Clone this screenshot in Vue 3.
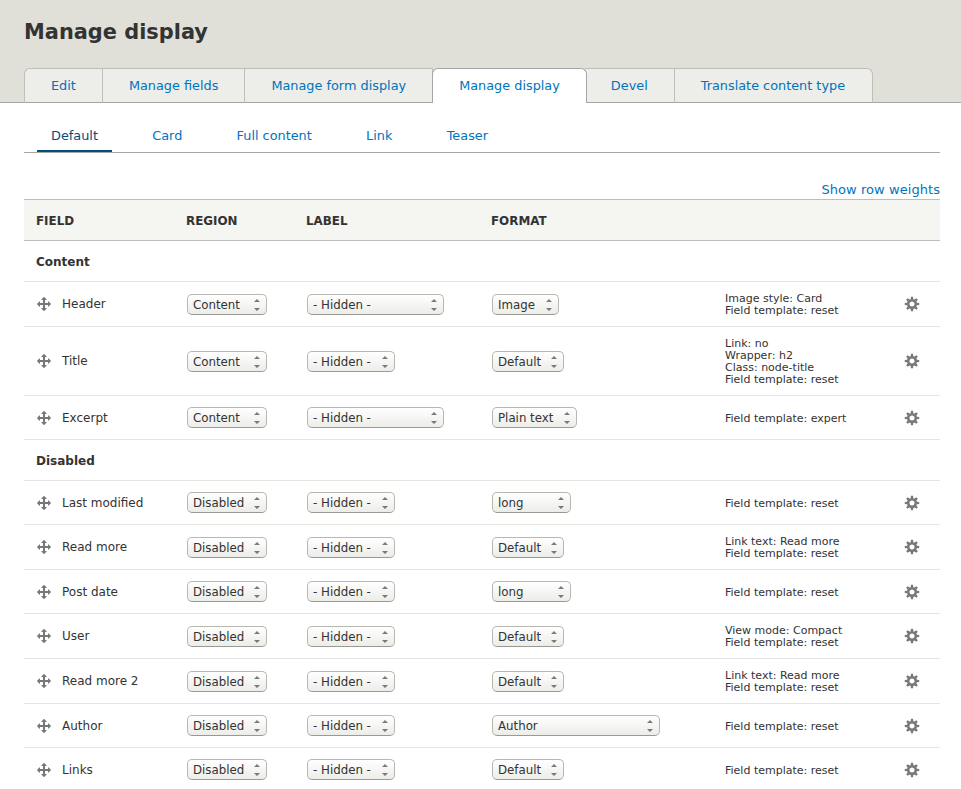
<script setup>
const tabs = ['Edit', 'Manage fields', 'Manage form display', 'Manage display', 'Devel', 'Translate content type']
const subtabs = ['Default', 'Card', 'Full content', 'Link', 'Teaser']
const sections = [
  { title: 'Content', rows: [
    { name: 'Header', region: 'Content', label: 'wide', format: 'Image', fw: 'f-image', summary: ['Image style: Card', 'Field template: reset'] },
    { name: 'Title', region: 'Content', label: 'short', format: 'Default', fw: 'f-default', summary: ['Link: no', 'Wrapper: h2', 'Class: node-title', 'Field template: reset'] },
    { name: 'Excerpt', region: 'Content', label: 'wide', format: 'Plain text', fw: 'f-plain', summary: ['Field template: expert'] },
  ] },
  { title: 'Disabled', rows: [
    { name: 'Last modified', region: 'Disabled', label: 'short', format: 'long', fw: 'f-long', summary: ['Field template: reset'] },
    { name: 'Read more', region: 'Disabled', label: 'short', format: 'Default', fw: 'f-default', summary: ['Link text: Read more', 'Field template: reset'] },
    { name: 'Post date', region: 'Disabled', label: 'short', format: 'long', fw: 'f-long', summary: ['Field template: reset'] },
    { name: 'User', region: 'Disabled', label: 'short', format: 'Default', fw: 'f-default', summary: ['View mode: Compact', 'Field template: reset'] },
    { name: 'Read more 2', region: 'Disabled', label: 'short', format: 'Default', fw: 'f-default', summary: ['Link text: Read more', 'Field template: reset'] },
    { name: 'Author', region: 'Disabled', label: 'short', format: 'Author', fw: 'f-author', summary: ['Field template: reset'] },
    { name: 'Links', region: 'Disabled', label: 'short', format: 'Default', fw: 'f-default', summary: ['Field template: reset'] },
  ] },
]
</script>

<template>
  <div class="page">
    <header class="head">
      <h1>Manage display</h1>
      <ul class="tabs">
        <li v-for="t in tabs" :key="t" :class="{ active: t === 'Manage display' }"><a href="#">{{ t }}</a></li>
      </ul>
    </header>
    <main class="content">
      <ul class="subtabs">
        <li v-for="(t, i) in subtabs" :key="t" :class="{ active: i === 0 }"><a href="#">{{ t }}</a></li>
      </ul>
      <div class="weights"><a href="#">Show row weights</a></div>
      <table>
        <thead>
          <tr>
            <th class="c-field">Field</th>
            <th class="c-region">Region</th>
            <th class="c-label">Label</th>
            <th class="c-format">Format</th>
            <th class="c-summary"></th>
            <th class="c-op"></th>
          </tr>
        </thead>
        <tbody v-for="s in sections" :key="s.title">
          <tr class="section"><td colspan="6">{{ s.title }}</td></tr>
          <tr v-for="r in s.rows" :key="r.name">
            <td class="name">
              <svg class="move" viewBox="0 0 16 16" width="16" height="16"><path fill="#787878" d="M14.904 7.753l-2.373-2.372c-.291-.292-.529-.193-.529.22v1.399h-3v-3h1.398c.414 0 .512-.239.221-.53l-2.371-2.372c-.137-.136-.36-.136-.497 0l-2.372 2.372c-.292.292-.193.53.22.53h1.399v3h-3v-1.369c0-.413-.239-.511-.53-.22l-2.372 2.372c-.136.136-.136.359 0 .494l2.372 2.372c.291.292.53.192.53-.219v-1.43h3v3h-1.4c-.413 0-.511.238-.22.529l2.374 2.373c.137.137.36.137.495 0l2.373-2.373c.29-.291.19-.529-.222-.529h-1.398v-3h3v1.4c0 .412.238.511.529.219l2.373-2.371c.137-.137.137-.359 0-.495z"/></svg>
              <span>{{ r.name }}</span>
            </td>
            <td>
              <span class="sel f-region">{{ r.region }}<svg class="arrows" viewBox="0 0 8 14" width="8" height="14"><path fill="#7a7a7a" d="M1 4l3-3 3 3zM1 10h6l-3 3z"/></svg></span>
            </td>
            <td>
              <span class="sel" :class="r.label === 'wide' ? 'l-wide' : 'l-short'">- Hidden -<svg class="arrows" viewBox="0 0 8 14" width="8" height="14"><path fill="#7a7a7a" d="M1 4l3-3 3 3zM1 10h6l-3 3z"/></svg></span>
            </td>
            <td>
              <span class="sel" :class="r.fw">{{ r.format }}<svg class="arrows" viewBox="0 0 8 14" width="8" height="14"><path fill="#7a7a7a" d="M1 4l3-3 3 3zM1 10h6l-3 3z"/></svg></span>
            </td>
            <td class="summary"><div v-for="l in r.summary" :key="l">{{ l }}</div></td>
            <td class="op">
              <svg viewBox="0 0 16 16" width="16" height="16"><path fill="#787878" d="M15.176 9.041c.045-.327.076-.658.076-.998 0-.36-.035-.71-.086-1.056l-2.275-.293c-.115-.426-.283-.827-.498-1.201l1.396-1.808c-.416-.551-.906-1.039-1.459-1.452l-1.807 1.391c-.373-.215-.774-.383-1.2-.499l-.292-2.252c-.338-.048-.677-.081-1.029-.081s-.694.033-1.032.082l-.291 2.251c-.426.116-.826.284-1.2.499l-1.805-1.391c-.552.413-1.044.901-1.459 1.452l1.395 1.808c-.215.374-.383.774-.499 1.2l-2.276.294c-.05.346-.085.696-.085 1.056 0 .34.031.671.077.998l2.285.295c.115.426.284.826.499 1.2l-1.417 1.836c.411.55.896 1.038 1.443 1.452l1.842-1.42c.374.215.774.383 1.2.498l.298 2.311c.337.047.677.08 1.025.08s.688-.033 1.021-.08l.299-2.311c.426-.115.826-.283 1.201-.498l1.842 1.42c.547-.414 1.031-.902 1.443-1.452l-1.416-1.837c.215-.373.383-.773.498-1.199l2.286-.295zm-7.174 1.514c-1.406 0-2.543-1.137-2.543-2.541 0-1.402 1.137-2.541 2.543-2.541 1.402 0 2.541 1.138 2.541 2.541 0 1.404-1.139 2.541-2.541 2.541z"/></svg>
            </td>
          </tr>
        </tbody>
      </table>
    </main>
  </div>
</template>

<style>
html, body { margin: 0; overflow: hidden; background: #fff; }
</style>

<style scoped>
.page {
  height: 789px;
  overflow: hidden;
  font-family: "DejaVu Sans", sans-serif;
  font-size: 12px;
  color: #333;
}
a { color: #0074bd; text-decoration: none; }
ul { list-style: none; margin: 0; padding: 0; }
.head {
  background: #e0e0d8;
  padding: 20px 0 0 24px;
  height: 83px;
  position: relative;
  box-shadow: inset 0 -1px 0 #a6a6a6;
}
h1 {
  margin: 0;
  font-size: 20.9px;
  font-weight: 700;
  line-height: 25px;
  color: #333;
}
.tabs {
  display: flex;
  margin-top: 23px;
  height: 35px;
}
.tabs li {
  box-sizing: border-box;
  height: 35px;
  background: #ededE9;
  border: 1px solid #bfbfba;
  border-left-width: 0;
  border-bottom: 0;
  box-shadow: inset 0 -1px 0 #a6a6a6;
}
.tabs li:first-child { border-left-width: 1px; border-top-left-radius: 6px; }
.tabs li:last-child { border-top-right-radius: 6px; padding-right: 1px; }
.tabs li.active {
  background: #fff;
  height: 35px;
  border-color: #a6a6a6;
  border-width: 1px 1px 0 1px;
  margin: 0 -2px 0 -1px;
  border-radius: 6px 6px 0 0;
  box-shadow: none;
  position: relative;
  z-index: 1;
}
.tabs a {
  display: block;
  padding: 0 26px;
  line-height: 33px;
  font-size: 12.85px;
}
.content { padding: 0 21px 0 24px; }
.subtabs {
  display: flex;
  height: 49px;
  border-bottom: 1px solid #a6a6a6;
  padding-left: 13px;
}
.subtabs li { margin-right: 26.3px; height: 49px; box-sizing: border-box; }
.subtabs a {
  display: block;
  padding: 0 14px;
  line-height: 66px;
  height: 49px;
  box-sizing: border-box;
  font-size: 12.85px;
}
.subtabs li.active a {
  color: #004f80;
  border-bottom: 2px solid #004f80;
}
.weights {
  text-align: right;
  margin-top: 28px;
  height: 18px;
  line-height: 17px;
  font-size: 13px;
  letter-spacing: 0.06px;
}
table {
  border-collapse: separate;
  border-spacing: 0;
  table-layout: fixed;
  width: 916px;
}
th {
  height: 42px;
  box-sizing: border-box;
  background: #f5f5f2;
  border-top: 1px solid #bfbfba;
  border-bottom: 1px solid #bfbfba;
  padding: 2px 12px 0;
  text-align: left;
  text-transform: uppercase;
  font-size: 11.9px;
  font-weight: 700;
  color: #333;
}
.c-field { width: 150px; }
.c-region { width: 120px; }
.c-label { width: 185px; }
.c-format { width: 234px; }
.c-summary { width: 179px; }
td {
  height: 44px;
  box-sizing: border-box;
  padding: 10px 12px;
  border-bottom: 1px solid #e6e4df;
  vertical-align: middle;
}
.section td {
  height: 41px;
  padding: 11px 12px 9px;
  font-weight: 700;
  font-size: 12px;
}
.name { white-space: nowrap; font-size: 12px; padding-right: 0; }
.name .move { vertical-align: -4px; width: 16px; margin-right: 10px; }
.sel {
  display: block;
  position: relative;
  box-sizing: border-box;
  height: 21px;
  margin: 0 0 0 1px;
  padding-left: 5px;
  line-height: 20px;
  font-size: 11.8px;
  white-space: nowrap;
  color: #333;
  border: 1px solid #b8b8b0;
  border-bottom-color: #9a9a94;
  border-radius: 5px;
  background: linear-gradient(#ffffff, #ecece8);
}
.arrows { position: absolute; right: 5px; top: 3px; }
.f-region { width: 80px; }
.l-wide { width: 137px; }
.l-short { width: 88px; }
.f-image { width: 67px; }
.f-default { width: 72px; }
.f-plain { width: 85px; }
.f-long { width: 79px; }
.f-author { width: 168px; }
.summary { font-size: 11px; line-height: 12px; padding: 11px 0 9px 12px; white-space: nowrap; }
.op { padding: 0 0 0 12px; text-align: left; }
.op svg { display: block; }
</style>
